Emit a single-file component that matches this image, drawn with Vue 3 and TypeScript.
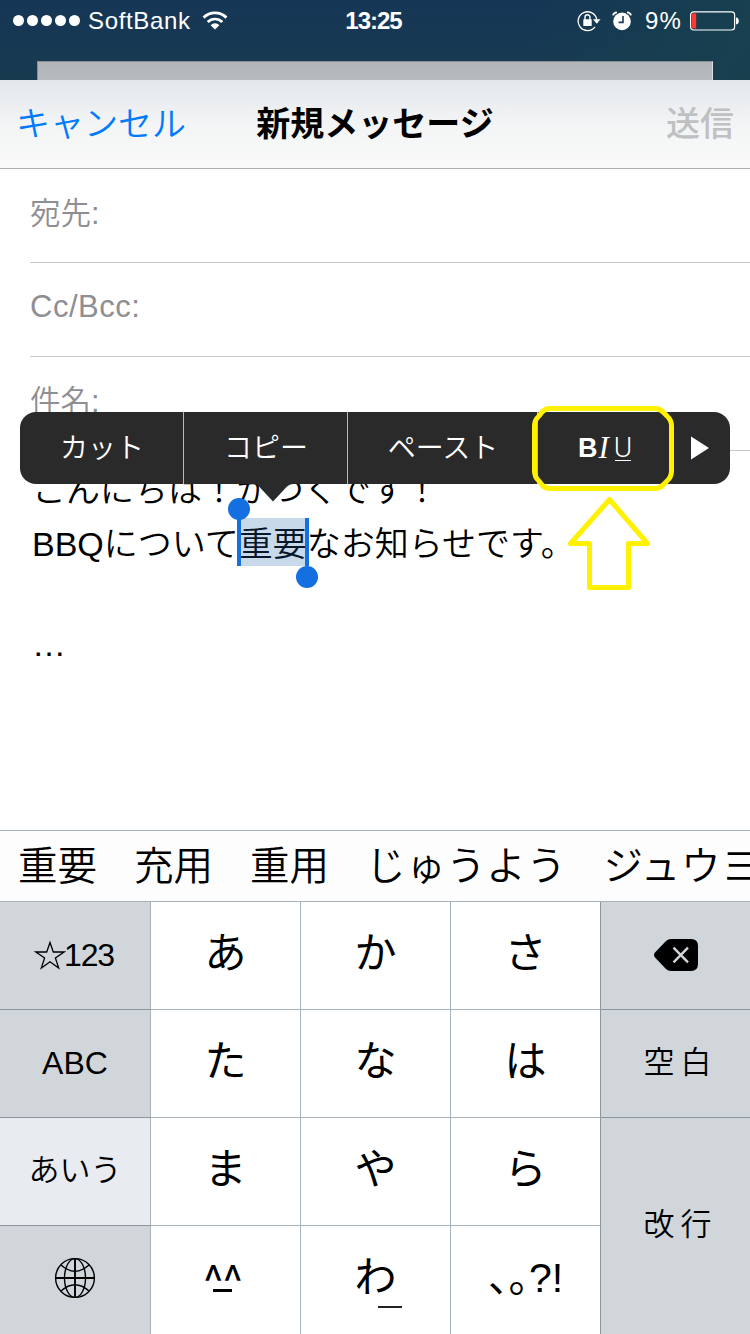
<script setup lang="ts">
interface Key {
  label: string
  kind: 'kana' | 'side' | 'mode' | 'face' | 'wa' | 'punct' | 'delete' | 'globe' | 'star'
  tone?: 'grey' | 'light'
  tall?: boolean
}

const candidates: string[] = ['重要', '充用', '重用', 'じゅうよう', 'ジュウヨ']
const fields: string[] = ['宛先:', 'Cc/Bcc:', '件名:']

const keys: Key[] = [
  { label: '123', kind: 'star', tone: 'grey' },
  { label: 'あ', kind: 'kana' },
  { label: 'か', kind: 'kana' },
  { label: 'さ', kind: 'kana' },
  { label: '', kind: 'delete', tone: 'grey' },
  { label: 'ABC', kind: 'mode', tone: 'grey' },
  { label: 'た', kind: 'kana' },
  { label: 'な', kind: 'kana' },
  { label: 'は', kind: 'kana' },
  { label: '空白', kind: 'side', tone: 'grey' },
  { label: 'あいう', kind: 'mode', tone: 'light' },
  { label: 'ま', kind: 'kana' },
  { label: 'や', kind: 'kana' },
  { label: 'ら', kind: 'kana' },
  { label: '改行', kind: 'side', tone: 'grey', tall: true },
  { label: '', kind: 'globe', tone: 'grey' },
  { label: '^^', kind: 'face' },
  { label: 'わ', kind: 'wa' },
  { label: '、。?!', kind: 'punct' },
]
</script>

<template>
  <div class="screen">
    <header class="status">
      <div class="carrier">
        <div class="dots"><i v-for="n in 5" :key="n"></i></div>
        <span class="carrier-name">SoftBank</span>
        <svg class="wifi" width="26" height="20" viewBox="0 0 26 20">
          <g fill="none" stroke="#fff">
            <path d="M1.6 6.6A16.2 16.2 0 0 1 24.4 6.6" stroke-width="2.9" />
            <path d="M5.7 11A10.4 10.4 0 0 1 20.3 11" stroke-width="2.7" />
          </g>
          <path d="M13 18.6L8.6 14.2A6.2 6.2 0 0 1 17.4 14.2Z" fill="#fff" />
        </svg>
      </div>
      <span class="clock">13:25</span>
      <div class="indicators">
        <svg width="24" height="22" viewBox="0 0 24 22">
          <path d="M18 16.9A9.4 9.4 0 1 1 19.8 9.6" fill="none" stroke="#fff" stroke-width="1.3" />
          <path d="M16 9.3H23.6L19.8 13.8Z" fill="#fff" />
          <rect x="6.3" y="9.2" width="8.4" height="6.8" rx=".5" fill="#fff" />
          <path d="M8 10V7.2a2.5 2.5 0 0 1 5 0V10" fill="none" stroke="#fff" stroke-width="1.4" />
        </svg>
        <svg class="alarm" width="20" height="22" viewBox="0 0 20 22">
          <circle cx="10" cy="11.4" r="8.8" fill="#fff" />
          <path d="M1 5.400Q1.400 2.600 5 2.300M15 2.300Q18.600 2.600 19 5.400" fill="none" stroke="#fff" stroke-width="1.7" />
          <path d="M11 6V12.400H6.600" fill="none" stroke="#17395a" stroke-width="1.6" />
        </svg>
        <span class="percent">9%</span>
        <svg width="50" height="20" viewBox="0 0 50 20">
          <rect x=".6" y=".8" width="44" height="18.2" rx="3" fill="none" stroke="#fff" stroke-width="1.2" />
          <rect x="2" y="2.4" width="4.2" height="15" fill="#ff3b30" />
          <path d="M46 6.4Q48.8 6.8 48.8 10T46 13.4Z" fill="#fff" />
        </svg>
      </div>
    </header>
    <div class="behind"></div>

    <nav class="nav">
      <span class="cancel">キャンセル</span>
      <span class="title">新規メッセージ</span>
      <span class="send">送信</span>
    </nav>

    <section class="fields">
      <div v-for="f in fields" :key="f" class="field">{{ f }}</div>
    </section>

    <section class="body">
      <p class="line first">こんにちは！かつくです！</p>
      <p class="line second">BBQについて<span class="sel">重要<i class="bar left"></i><i class="bar right"></i></span>なお知らせです。</p>
      <p class="line dots-line">…</p>
    </section>

    <div class="menu">
      <span class="item cut">カット</span>
      <span class="item copy">コピー</span>
      <span class="item paste">ペースト</span>
      <span class="item biu"><b>B</b><em>I</em><u>U</u></span>
      <span class="item more">
        <svg width="18" height="24" viewBox="0 0 18 24"><path d="M0 .5L18 12L0 23.5Z" fill="#fff" /></svg>
      </span>
      <svg class="tail" width="40" height="18" viewBox="0 0 40 18">
        <path d="M0 0H40Q36.5 0 34 2.5L20 17.5L6 2.5Q3.500 0 0 0Z" fill="#292a2c" />
      </svg>
    </div>

    <svg class="marker" width="150" height="194" viewBox="0 0 150 194">
      <g fill="none" stroke="#fff100" stroke-width="5" stroke-linejoin="round">
        <path d="M21 4.500H126Q131 4.500 134 8L138 12Q142.500 16 142.500 22V67Q142.500 73 138 77L134 81Q131 84.500 126 84.500H21Q16 84.500 13 81L10 77Q5.500 73 5.500 67V22Q5.500 16 10 12L13 8Q16 4.500 21 4.500Z" />
        <path d="M80.500 95.500L118.500 139.500H99.500V183.500H60.500V139.500H41.500Z" />
      </g>
    </svg>

    <section class="keyboard">
      <div class="candidates">
        <span v-for="c in candidates" :key="c">{{ c }}</span>
      </div>
      <div class="keys">
        <div v-for="(k, i) in keys" :key="i" class="key" :class="[k.kind, k.tone, { tall: k.tall }]">
          <svg v-if="k.kind === 'star'" class="star" width="32" height="30" viewBox="0 0 32 30">
            <path d="M16 2.500L19.300 12H30L21.400 17.900L24.700 28L16 21.800L7.300 28L10.600 17.900L2 12H12.700Z" fill="none" stroke="#000" stroke-width="1.300" />
          </svg>
          <svg v-if="k.kind === 'delete'" width="44" height="32" viewBox="0 0 44 32">
            <path d="M17 0H37Q44 0 44 7V25Q44 32 37 32H17Q14 32 12 30L1 18.500Q-1 16 1 13.500L12 2Q14 0 17 0Z" fill="#000" />
            <path d="M19.500 8.700L34 23.300M34 8.700L19.500 23.300" stroke="#d1d6da" stroke-width="2.400" />
          </svg>
          <svg v-if="k.kind === 'globe'" width="42" height="42" viewBox="0 0 42 42">
            <g fill="none" stroke="#000" stroke-width="1.400">
              <circle cx="21" cy="21" r="19.400" />
              <ellipse cx="21" cy="21" rx="10.500" ry="19.400" />
              <path d="M7 8Q21 20.500 35 8M7 34Q21 21.500 35 34" />
              <path d="M21 1.500V40.500M1.500 21H40.500" stroke-width="1.900" />
            </g>
          </svg>
          <span v-if="k.label" class="label">{{ k.label }}</span>
          <span v-if="k.kind === 'face'" class="mouth"></span>
          <span v-if="k.kind === 'wa'" class="under"></span>
        </div>
      </div>
    </section>
  </div>
</template>

<style>
html,
body {
  margin: 0;
  overflow: hidden;
}
</style>

<style scoped>
.screen {
  position: relative;
  isolation: isolate;
  box-sizing: border-box;
  width: 750px;
  height: 1334px;
  overflow: hidden;
  display: flex;
  flex-direction: column;
  background: #fff;
  color: #000;
  font-family: "Liberation Sans", "Noto Sans CJK JP", sans-serif;
}

.status {
  height: 80px;
  flex: none;
  box-sizing: border-box;
  padding: 0 10px 39px 13px;
  display: grid;
  grid-template-columns: 1fr auto 1fr;
  align-items: center;
  color: #fff;
  font-size: 24px;
  line-height: 28px;
  background: linear-gradient(100deg, #17395000 70%, #17404f 100%), linear-gradient(#163656, #183b50);
}

.carrier,
.indicators,
.dots {
  display: flex;
  align-items: center;
}

.dots {
  gap: 3px;
}

.dots i {
  width: 11px;
  height: 11px;
  border-radius: 50%;
  background: #fff;
}

.carrier-name {
  margin-left: 8px;
  letter-spacing: 0.65px;
}

.wifi {
  margin-left: 11px;
}

.clock {
  font-weight: 700;
  font-size: 24px;
  letter-spacing: -1px;
  padding-right: 6px;
}

.indicators {
  justify-content: flex-end;
}

.alarm {
  margin-left: 11px;
}

.percent {
  margin: 0 8px 0 13px;
  letter-spacing: 1.2px;
}

.behind {
  position: absolute;
  left: 37px;
  top: 61px;
  width: 676px;
  height: 19px;
  box-sizing: border-box;
  background: linear-gradient(#b1b5b9, #b8bbbd);
  border: 1px solid #898f95;
  border-right-color: #d9dee2;
  border-bottom: 0;
}

.nav {
  height: 89px;
  flex: none;
  box-sizing: border-box;
  border-bottom: 1px solid #b2b2b2;
  background: linear-gradient(#e2e7eb, #f3f4f5 50%, #f9faf9);
  padding: 0 16px;
  display: grid;
  grid-template-columns: 1fr auto 1fr;
  align-items: center;
  font-size: 34px;
  line-height: 50px;
}

.cancel {
  color: #007aff;
  font-weight: 350;
}

.title {
  font-weight: 700;
}

.send {
  color: #bfc0c2;
  font-weight: 500;
  text-align: right;
}

.fields {
  flex: none;
  padding-left: 30px;
}

.field {
  height: 94px;
  box-sizing: border-box;
  border-bottom: 1px solid #c8c7cc;
  color: #8e8e93;
  font-size: 30.5px;
  font-weight: 350;
  line-height: 44px;
  padding-top: 22px;
}

.field:nth-child(2) {
  font-size: 31px;
  letter-spacing: 0.5px;
}

.body {
  isolation: isolate;
  flex: 1;
  padding-left: 32px;
  font-size: 34px;
  font-weight: 350;
}

.line {
  margin: 0;
  height: 54px;
  line-height: 54px;
  white-space: nowrap;
}

.first {
  margin-top: 12px;
}

.dots-line {
  margin-top: 46px;
}

.sel {
  position: relative;
  display: inline-block;
  height: 48px;
  line-height: 48px;
  color: #07182b;
}

.sel::before {
  content: "";
  position: absolute;
  z-index: -1;
  inset: -2px 0 2px 0;
  background: #c8daea;
}

.bar {
  position: absolute;
  top: -2px;
  width: 4px;
  height: 48px;
  background: #146fe1;
}

.bar::after {
  content: "";
  position: absolute;
  left: -9px;
  width: 22px;
  height: 22px;
  border-radius: 50%;
  background: #146fe1;
}

.left {
  left: -2px;
}

.left::after {
  top: -20px;
}

.right {
  right: -2px;
}

.right::after {
  bottom: -22px;
}

.menu {
  position: absolute;
  z-index: 2;
  left: 20px;
  top: 412px;
  width: 710px;
  height: 72px;
  border-radius: 16px;
  background: #2a2a2a;
  display: flex;
  color: #fff;
  font-size: 28px;
  font-weight: 350;
}

.item {
  box-sizing: border-box;
  display: flex;
  align-items: center;
  justify-content: center;
  line-height: 40px;
  border-right: 1px solid #b8b8b8;
  padding: 2px 0 0 1px;
}

.cut {
  width: 164px;
}

.copy {
  width: 164px;
}

.paste {
  width: 190px;
}

.biu {
  width: 132px;
  padding: 0 0 0 2px;
  gap: 3px;
  border: 0;
}

.biu b {
  font-size: 27px;
  font-weight: 700;
}

.biu em {
  font-family: "Liberation Serif", serif;
  font-size: 31px;
  margin-left: -2px;
}

.biu u {
  position: relative;
  margin-left: 2px;
  text-decoration: none;
  font-family: Roboto, sans-serif;
  font-weight: 300;
  font-size: 28px;
}

.biu u::after {
  content: "";
  position: absolute;
  left: 1px;
  right: 1px;
  top: 32px;
  height: 1px;
  background: #fff;
}

.more {
  flex: 1;
  border: 0;
  padding: 0;
}

.tail {
  position: absolute;
  left: 233px;
  top: 72px;
}

.marker {
  position: absolute;
  z-index: 3;
  left: 529px;
  top: 404px;
}

.keyboard {
  height: 504px;
  flex: none;
}

.candidates {
  height: 72px;
  box-sizing: border-box;
  border-top: 1px solid #a9b2bc;
  border-bottom: 1px solid #a9b2bc;
  background: #fdfdfd;
  padding-left: 18px;
  display: flex;
  align-items: center;
  gap: 37px;
  font-size: 39.5px;
  font-weight: 350;
  line-height: 56px;
  white-space: nowrap;
  overflow: hidden;
}

.candidates span:nth-child(n + 4) {
  letter-spacing: 0.6px;
}

.keys {
  display: grid;
  grid-template-columns: 151px 150px 150px 150px 149px;
  grid-template-rows: repeat(4, 108px);
}

.key {
  position: relative;
  box-sizing: border-box;
  display: flex;
  align-items: center;
  justify-content: center;
  border-right: 1px solid #a9b2bc;
  border-bottom: 1px solid #a9b2bc;
  background: #fff;
  font-size: 42px;
  line-height: 58px;
}

.key:nth-child(n + 16) {
  border-bottom: 0;
  padding-bottom: 4px;
}

.key:nth-child(5n) {
  border-right: 0;
}

.key:nth-child(5n + 4) {
  border-right-color: #8d949b;
}

.key.grey {
  background: #d1d6da;
  border-bottom-color: #8d949b;
}

.key.light {
  background: #e8ebf0;
  border-bottom-color: #8d949b;
}

.key.delete {
  padding: 0 0 2px 0;
}

.key.tall {
  grid-row: span 2;
  border-bottom: 0;
}

.kana .label {
  margin-bottom: 4px;
}

.mode,
.star {
  font-size: 32px;
}

.mode,
.side {
  font-weight: 350;
  padding-bottom: 2px;
}

.key.light {
  font-size: 31px;
}

.side .label {
  font-size: 31px;
  letter-spacing: 6px;
  padding-left: 10px;
}

.key.star {
  padding: 0 2px 1px 0;
}

.star .label {
  letter-spacing: -1.2px;
  margin-left: -2px;
}

.key.face {
  padding-bottom: 8px;
}

.face .label {
  font-family: "Noto Sans CJK JP", sans-serif;
  font-size: 36px;
  font-weight: 500;
  letter-spacing: -1px;
  margin-right: 6px;
}

.punct .label {
  font-size: 41px;
  font-feature-settings: "halt";
}

.mouth {
  position: absolute;
  left: 62px;
  top: 63px;
  width: 19px;
  height: 3px;
  background: #000;
}

.under {
  position: absolute;
  left: 77px;
  top: 80px;
  width: 24px;
  height: 2px;
  background: #222;
}
</style>
